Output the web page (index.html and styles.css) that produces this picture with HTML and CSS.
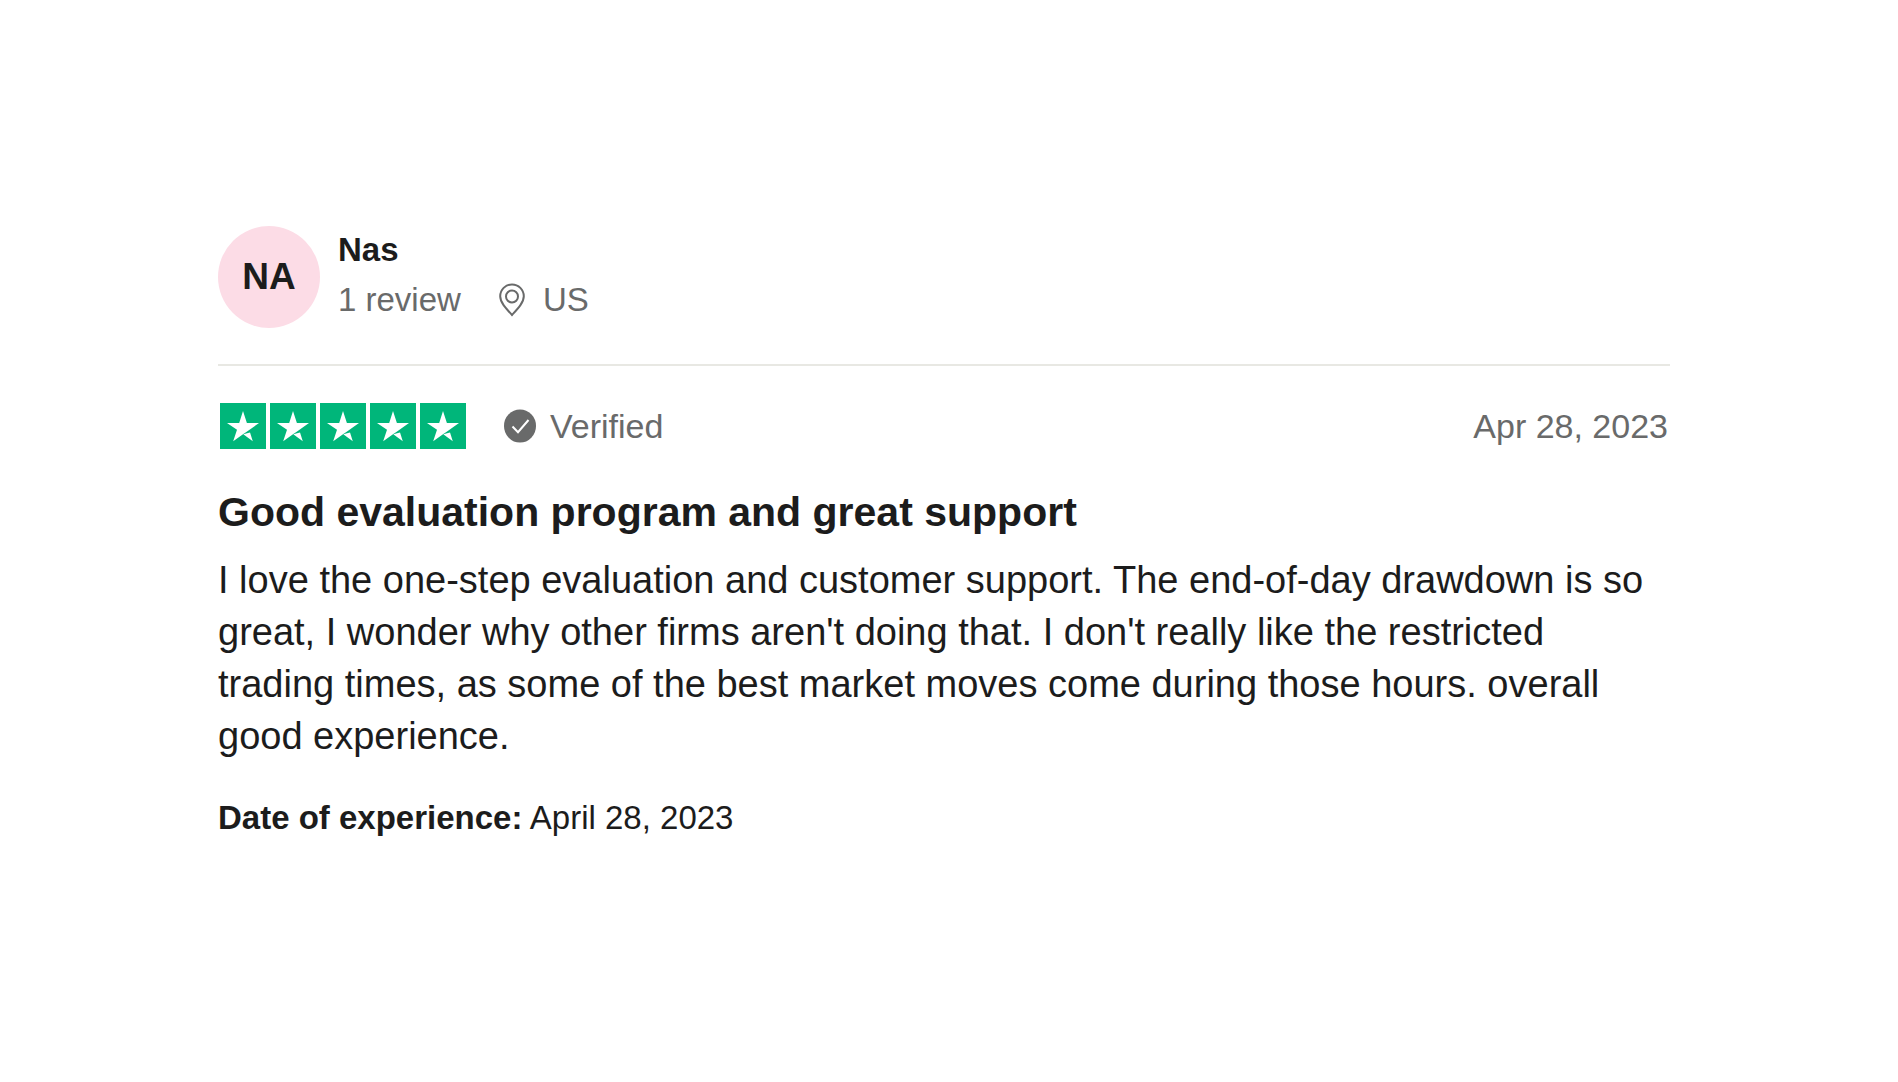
FILE: index.html
```html
<!DOCTYPE html>
<html lang="en">
<head>
  <meta charset="UTF-8">
  <meta name="viewport" content="width=device-width, initial-scale=1.0">
  <title>Review</title>
  <link rel="stylesheet" href="styles.css">
</head>
<body>

  <!-- Star tile, reused five times in the rating -->
  <svg class="sprite" aria-hidden="true">
    <symbol id="star" viewBox="0 0 46 46">
      <rect width="46" height="46" fill="#00b67a"/>
      <path fill="#fff" d="M23 8l3.900 12H39L26.700 28.800 23 31.300 13.200 38.300 17 26.700 7 20h12.200z"/>
      <path fill="#fff" d="M23.300 31.200l6.700-1.700L32.800 38.300z"/>
    </symbol>
  </svg>

  <article class="review">
    <header class="consumer">
      <div class="avatar">NA</div>
      <div class="consumer-info">
        <div class="name">Nas</div>
        <div class="details">
          <span>1 review</span>
          <span class="location">
            <svg class="pin" viewBox="0 0 26 34" fill="none" stroke="#696a6a" stroke-width="2">
              <path d="M13 32C7 25.500 1.200 19.500 1.200 13.200a11.800 11.800 0 0 1 23.600 0C24.800 19.500 19 25.500 13 32z"/>
              <circle cx="13" cy="13.500" r="6"/>
            </svg>
            US
          </span>
        </div>
      </div>
    </header>

    <div class="rating-row">
      <div class="stars" role="img" aria-label="Rated 5 out of 5 stars">
        <svg class="star"><use href="#star"/></svg>
        <svg class="star"><use href="#star"/></svg>
        <svg class="star"><use href="#star"/></svg>
        <svg class="star"><use href="#star"/></svg>
        <svg class="star"><use href="#star"/></svg>
      </div>
      <div class="verified">
        <svg class="check" viewBox="0 0 32 34">
          <ellipse cx="16" cy="17" rx="16" ry="16.500" fill="#696a6a"/>
          <path d="M8.500 17.500l5.500 5.700L24.500 11" fill="none" stroke="#fff" stroke-width="2"/>
        </svg>
        <span>Verified</span>
      </div>
      <time class="date" datetime="2023-04-28">Apr 28, 2023</time>
    </div>

    <h2 class="title">Good evaluation program and great support</h2>
    <p class="text">I love the one-step evaluation and customer support. The end-of-day drawdown is so great, I wonder why other firms aren't doing that. I don't really like the restricted trading times, as some of the best market moves come during those hours. overall good experience.</p>
    <p class="experience"><b>Date of experience:</b> April 28, 2023</p>
  </article>

</body>
</html>
```
FILE: styles.css
```css
body {
  margin: 0;
  background-color: #fff;
  color: #1c1c1c;
  font-family: "Liberation Sans", Arial, Helvetica, sans-serif;
  font-size: 33px;
  line-height: 48px;
}

.sprite {
  display: none;
}

.review {
  padding: 226px 228px 0 218px;
}

/* Reviewer */
.consumer {
  display: flex;
  align-items: flex-start;
  gap: 18px;
  padding-bottom: 36px;
  border-bottom: 2px solid #e8e8e3;
}

.avatar {
  width: 102px;
  height: 102px;
  border-radius: 50%;
  background-color: #fcdce6;
  font-size: 37px;
  font-weight: bold;
  line-height: 102px;
  text-align: center;
}

.name {
  margin-bottom: 2px;
  font-weight: bold;
}

.details {
  display: flex;
  gap: 38px;
  color: #696a6a;
}

.location {
  display: flex;
  align-items: center;
  gap: 18px;
}

.pin {
  width: 26px;
  height: 34px;
}

/* Stars, verified label and date */
.rating-row {
  display: flex;
  align-items: center;
  padding: 36px 2px 0;
  color: #696a6a;
  font-size: 34px;
}

.stars {
  display: flex;
  gap: 4px;
}

.star {
  width: 46px;
  height: 46px;
}

.verified {
  display: flex;
  align-items: center;
  gap: 14px;
  margin-left: 38px;
}

.check {
  width: 32px;
  height: 34px;
}

.date {
  margin-left: auto;
}

/* Review content */
.title {
  margin: 36px 0 0;
  font-size: 41px;
  line-height: 52px;
}

.text {
  margin: 16px 12px 0 0;
  font-size: 38px;
  line-height: 52px;
}

.experience {
  margin: 32px 0 0;
}
```
